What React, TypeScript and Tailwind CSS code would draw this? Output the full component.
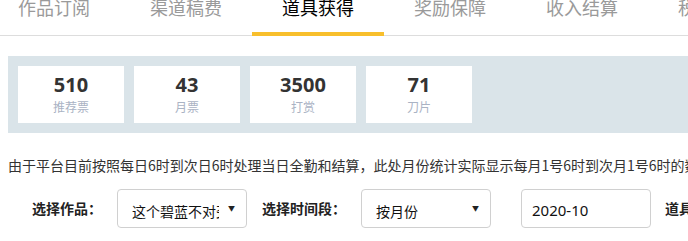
const tabs = ["作品订阅", "渠道稿费", "道具获得", "奖励保障", "收入结算", "税务信息"]

const stats = [
  { value: "510", label: "推荐票" },
  { value: "43", label: "月票" },
  { value: "3500", label: "打赏" },
  { value: "71", label: "刀片" },
]

function FakeSelect({ value }: { value: string }) {
  return (
    <div className="flex items-center h-[39px] w-[130px] shrink-0 border border-[#d0d0d0] rounded-[4px] bg-white pl-[14px] pr-[11px]">
      <div className="w-[87px] overflow-hidden whitespace-nowrap text-[14px] leading-[20px] text-[#111] pt-[4px]">{value}</div>
      <span className="ml-auto text-[7px] text-[#222] leading-none">▼</span>
    </div>
  )
}

export default function App() {
  return (
    <div className="w-[688px] h-[241px] overflow-hidden bg-white font-['Noto_Sans_CJK_SC',sans-serif]">
      {/* tabs */}
      <div className="flex h-[36px] border-b border-[#dddddd]">
        <div className="flex -ml-[12px] shrink-0">
          {tabs.map((t, i) => (
            <div key={t} className="relative w-[132px] shrink-0 text-center">
              <div
                className={`text-[18px] leading-[18px] -mt-[2px] whitespace-nowrap ${
                  i === 2 ? "text-black" : "text-[#9a9a9a]"
                }`}
              >
                {t}
              </div>
              {i === 2 && <div className="absolute left-0 right-0 bottom-[-1px] h-[4px] bg-[#f8bf2c]" />}
            </div>
          ))}
        </div>
      </div>

      {/* stats */}
      <div className="ml-[8px] mt-[20px] bg-[#dae4e9] p-[10px] flex gap-[10px]">
        {stats.map((s) => (
          <div key={s.label} className="w-[106px] h-[57px] bg-white flex flex-col items-center justify-center">
            <div className="text-[20px] leading-[22px] font-bold text-[#333] font-['Noto_Sans',sans-serif]">{s.value}</div>
            <div className="text-[12px] leading-[16px] text-[#aab3c4] mt-[3px]">{s.label}</div>
          </div>
        ))}
      </div>

      {/* notice */}
      <div className="ml-[8px] mt-[24px] text-[14px] leading-[16px] text-[#333] whitespace-nowrap">
        由于平台目前按照每日6时到次日6时处理当日全勤和结算，此处月份统计实际显示每月1号6时到次月1号6时的数据
      </div>

      {/* filters */}
      <div className="flex items-center mt-[16px] pl-[32px] whitespace-nowrap">
        <div className="text-[14px] font-bold text-[#222] w-[85px] shrink-0">选择作品：</div>
        <FakeSelect value="这个碧蓝不对劲" />
        <div className="text-[14px] font-bold text-[#222] ml-[15px] w-[99px] shrink-0">选择时间段：</div>
        <FakeSelect value="按月份" />
        <div className="ml-[30px] h-[39px] w-[130px] shrink-0 border border-[#d0d0d0] rounded-[4px] bg-white pl-[10px] flex items-center">
          <span className="text-[15px] leading-[20px] text-[#111] pt-[3px] font-['Noto_Sans',sans-serif]">2020-10</span>
        </div>
        <div className="ml-[14px] text-[14px] font-bold text-[#222]">道具获得：</div>
      </div>
    </div>
  )
}
